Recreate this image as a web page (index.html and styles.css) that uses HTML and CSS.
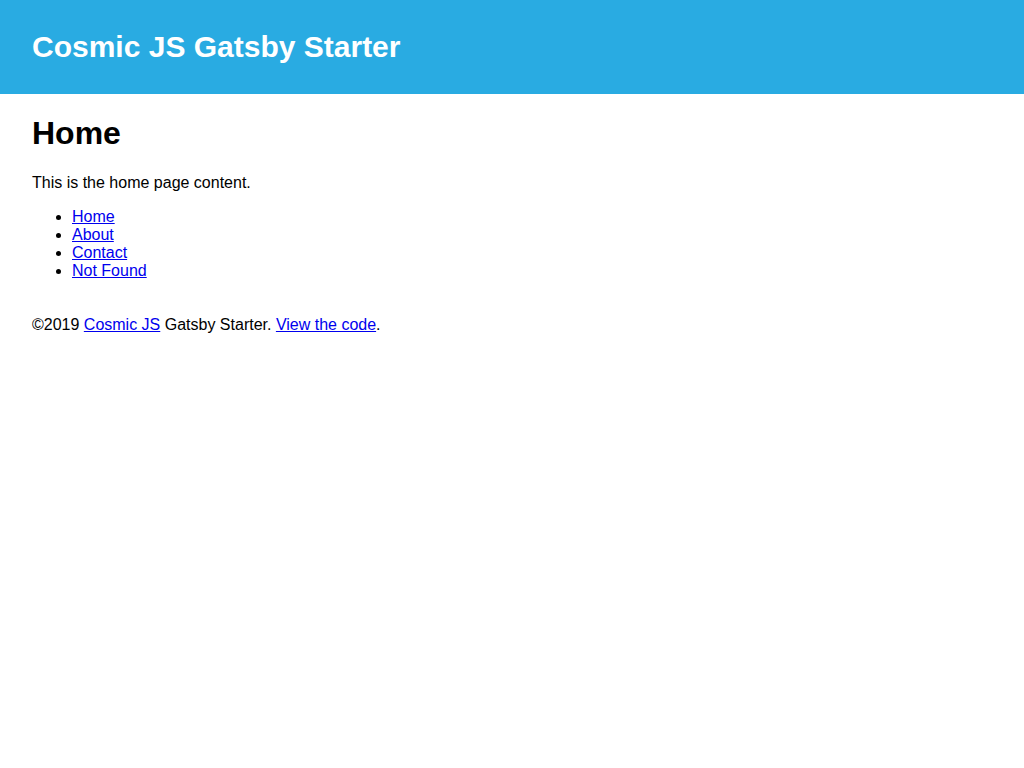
FILE: index.html
```html
<!DOCTYPE html>
<html lang="en">
<head>
<meta charset="utf-8">
<title>Cosmic JS Gatsby Starter</title>
<link rel="stylesheet" href="styles.css">
</head>
<body>
<header class="site-header">
  <div class="site-title">Cosmic JS Gatsby Starter</div>
</header>
<div class="wrapper">
  <main>
    <h1 class="page-title">Home</h1>
    <p>This is the home page content.</p>
    <ul class="nav-list">
      <li><a href="#">Home</a></li>
      <li><a href="#">About</a></li>
      <li><a href="#">Contact</a></li>
      <li><a href="#">Not Found</a></li>
    </ul>
  </main>
  <footer class="site-footer">©2019 <a href="#">Cosmic JS</a> Gatsby Starter. <a href="#">View the code</a>.</footer>
</div>
</body>
</html>
```
FILE: styles.css
```css
html, body {
  margin: 0;
  padding: 0;
}
body {
  font-family: "Liberation Sans", Arial, sans-serif;
  font-size: 16px;
  color: #000;
  background: #fff;
}
.site-header {
  background: #29abe2;
  height: 94px;
  display: flex;
  align-items: center;
  padding: 0 32px;
}
.site-title {
  color: #fff;
  font-weight: bold;
  font-size: 30px;
}
.wrapper {
  padding: 0 32px;
}
.page-title {
  font-size: 32px;
  margin: 21.44px 0;
}
.nav-list {
  padding-left: 40px;
}
.site-footer {
  padding-top: 20px;
}
a {
  color: #0000ee;
}
```
